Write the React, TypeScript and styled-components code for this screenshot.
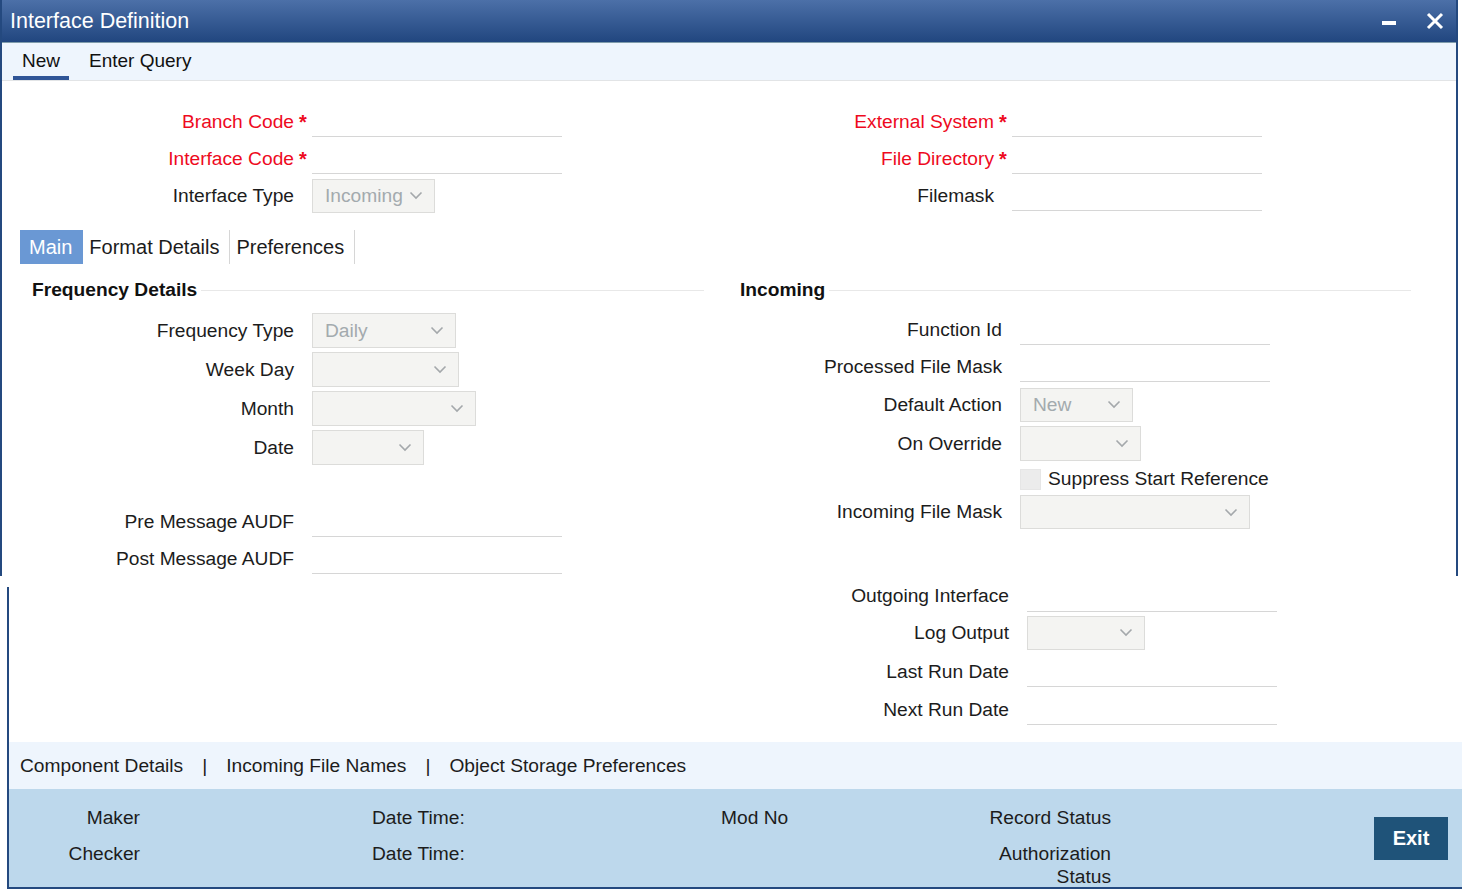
import React from "react";
import styled, { createGlobalStyle } from "styled-components";

const Global = createGlobalStyle`
  html, body { margin: 0; padding: 0; background: #ffffff; }
  body { font-family: "Liberation Sans", Arial, sans-serif; color: #1c1c1c; }
  * { box-sizing: border-box; }
`;

const Page = styled.div`
  width: 1462px;
  display: flex;
  flex-direction: column;
`;

const TopWindow = styled.div`
  width: 1458px;
  height: 576px;
  border-left: 2px solid #24497f;
  border-right: 2px solid #24497f;
  overflow: hidden;
  display: flex;
  flex-direction: column;
`;

const TitleBar = styled.div`
  height: 43px;
  flex: none;
  display: flex;
  align-items: center;
  padding: 0 12px 0 8px;
  background: linear-gradient(#4c70a8, #21467f);
  border-bottom: 1px solid #7f9cab;
`;

const Title = styled.div`
  flex: 1;
  color: #ffffff;
  font-size: 21.5px;
  line-height: 42px;
`;

const WinControls = styled.div`
  display: flex;
  align-items: center;
  gap: 30px;
`;

const MinIcon = styled.div`
  width: 14px;
  height: 4px;
  background: #ffffff;
  margin-top: 3px;
`;

const Toolbar = styled.div`
  height: 38px;
  flex: none;
  display: flex;
  align-items: stretch;
  gap: 11px;
  padding-left: 11px;
  background: #eef5fd;
  border-bottom: 1px solid #e2e4e6;
`;

const ToolItem = styled.div<{ $active?: boolean }>`
  padding: 0 9px;
  font-size: 19px;
  line-height: 36px;
  color: #111;
  border-bottom: 4px solid ${(p) => (p.$active ? "#2f5597" : "transparent")};
  height: 37px;
`;

const HeaderGrid = styled.div`
  display: grid;
  grid-template-columns: 560px 1fr;
  grid-auto-rows: 37px;
  padding-top: 22px;
`;

const Row = styled.div<{ $labelW: number; $h?: number; $top?: boolean }>`
  display: grid;
  grid-template-columns: ${(p) => p.$labelW}px 18px auto;
  align-items: ${(p) => (p.$top ? "start" : "center")};
  height: ${(p) => p.$h ?? 37}px;
`;

const Label = styled.div<{ $required?: boolean; $lh?: number }>`
  text-align: right;
  font-size: 19.2px;
  line-height: ${(p) => p.$lh ?? 22}px;
  color: ${(p) => (p.$required ? "#ee0a1e" : "#1c1c1c")};
  white-space: nowrap;
`;

const Star = styled.span`
  color: #ee0a1e;
  font-size: 20px;
  font-weight: bold;
  padding-left: 5px;
  align-self: center;
  line-height: 22px;
`;

const TextInput = styled.div<{ $w?: number; $h?: number }>`
  width: ${(p) => p.$w ?? 250}px;
  height: ${(p) => p.$h ?? 30}px;
  border-bottom: 1px solid #d6d6d6;
`;

const SelectBox = styled.div<{ $w: number; $h: number }>`
  width: ${(p) => p.$w}px;
  height: ${(p) => p.$h}px;
  background: #f4f4f2;
  border: 1px solid #dcdcda;
  display: flex;
  align-items: center;
  padding: 0 11px 0 12px;
  font-size: 19.2px;
  color: #a3aaae;
`;

const SelectValue = styled.span`
  flex: 1;
`;

const Chevron = () => (
  <svg width="14" height="9" viewBox="0 0 14 9">
    <path d="M1.5 1.5 L7 7 L12.5 1.5" fill="none" stroke="#a4a8ab" strokeWidth="1.6" />
  </svg>
);

const Select = ({ w, h, value }: { w: number; h: number; value?: string }) => (
  <SelectBox $w={w} $h={h}>
    <SelectValue>{value}</SelectValue>
    <Chevron />
  </SelectBox>
);

const TabBar = styled.div`
  display: flex;
  margin-top: 16px;
  padding-left: 18px;
  height: 34px;
`;

const Tab = styled.div<{ $active?: boolean }>`
  font-size: 20px;
  line-height: 34px;
  padding: ${(p) => (p.$active ? "0 10px 0 9px" : "0 10px 0 6px")};
  background: ${(p) => (p.$active ? "#6a98d4" : "transparent")};
  color: ${(p) => (p.$active ? "#ffffff" : "#1c1c1c")};
  border-right: 1px solid ${(p) => (p.$active ? "transparent" : "#d6d6d6")};
`;

const Columns = styled.div`
  display: flex;
  margin-top: 14px;
`;

const Column = styled.div<{ $w: number }>`
  width: ${(p) => p.$w}px;
  flex: none;
  display: flex;
  flex-direction: column;
`;

const Heading = styled.div<{ $pad: number }>`
  display: flex;
  align-items: center;
  height: 22px;
  padding-left: ${(p) => p.$pad}px;
  margin-top: 1px;
  margin-bottom: 10px;
  font-size: 19.2px;
  font-weight: bold;
  color: #111;
  &::after {
    content: "";
    flex: 1;
    height: 1px;
    margin-left: 4px;
    background: #e8e8e8;
  }
`;

const Spacer = styled.div<{ $h: number }>`
  height: ${(p) => p.$h}px;
`;

const CheckRow = styled.div`
  display: flex;
  align-items: center;
  height: 32px;
  padding-left: 316px;
  gap: 7px;
  font-size: 19.2px;
  color: #1c1c1c;
`;

const CheckBox = styled.div`
  width: 21px;
  height: 21px;
  background: #ececec;
  border: 1px solid #e6e6e6;
`;

const BottomWindow = styled.div`
  margin-top: 11px;
  margin-left: 7px;
  border-left: 2px solid #24497f;
  border-bottom: 2px solid #24497f;
  display: flex;
  flex-direction: column;
`;

const ContColumns = styled.div`
  display: flex;
  padding-left: 702px;
`;

const LinksBar = styled.div`
  margin-top: 14px;
  height: 47px;
  background: #eef5fd;
  display: flex;
  align-items: center;
  padding-left: 11px;
  font-size: 19.2px;
  color: #1c1c1c;
`;

const Sep = styled.span`
  margin: 0 19px;
`;

const AuditBar = styled.div`
  height: 98px;
  background: #bdd8ec;
  display: flex;
  align-items: flex-start;
`;

const AuditGrid = styled.div`
  display: grid;
  grid-template-columns: 131px 232px 349px 268px 122px;
  grid-auto-rows: 22px;
  row-gap: 14px;
  padding-top: 17px;
  font-size: 19.2px;
  line-height: 22px;
  color: #1c1c1c;
`;

const AuditCell = styled.div<{ $right?: boolean; $col: number }>`
  grid-column: ${(p) => p.$col};
  text-align: ${(p) => (p.$right ? "right" : "left")};
  line-height: 23px;
`;

const ExitButton = styled.button`
  margin-left: auto;
  margin-right: 14px;
  align-self: center;
  width: 74px;
  height: 43px;
  border: none;
  background: #1f5379;
  color: #ffffff;
  font-family: "Liberation Sans", Arial, sans-serif;
  font-weight: bold;
  font-size: 20px;
  padding: 0;
`;

export default function App() {
  return (
    <>
      <Global />
      <Page>
        <TopWindow>
          <TitleBar>
            <Title>Interface Definition</Title>
            <WinControls>
              <MinIcon />
              <svg width="18" height="18" viewBox="0 0 18 18">
                <path d="M2 2 L16 16 M16 2 L2 16" stroke="#ffffff" strokeWidth="3" />
              </svg>
            </WinControls>
          </TitleBar>
          <Toolbar>
            <ToolItem $active>New</ToolItem>
            <ToolItem>Enter Query</ToolItem>
          </Toolbar>
          <HeaderGrid>
            <Row $labelW={292}>
              <Label $required>Branch Code</Label>
              <Star>*</Star>
              <TextInput />
            </Row>
            <Row $labelW={432}>
              <Label $required>External System</Label>
              <Star>*</Star>
              <TextInput />
            </Row>
            <Row $labelW={292}>
              <Label $required>Interface Code</Label>
              <Star>*</Star>
              <TextInput />
            </Row>
            <Row $labelW={432}>
              <Label $required>File Directory</Label>
              <Star>*</Star>
              <TextInput />
            </Row>
            <Row $labelW={292}>
              <Label>Interface Type</Label>
              <span />
              <Select w={123} h={34} value="Incoming" />
            </Row>
            <Row $labelW={432}>
              <Label>Filemask</Label>
              <span />
              <TextInput />
            </Row>
          </HeaderGrid>
          <TabBar>
            <Tab $active>Main</Tab>
            <Tab>Format Details</Tab>
            <Tab>Preferences</Tab>
          </TabBar>
          <Columns>
            <Column $w={702}>
              <Heading $pad={30}>Frequency Details</Heading>
              <Row $labelW={292} $h={39}>
                <Label>Frequency Type</Label>
                <span />
                <Select w={144} h={35} value="Daily" />
              </Row>
              <Row $labelW={292} $h={39}>
                <Label>Week Day</Label>
                <span />
                <Select w={147} h={35} />
              </Row>
              <Row $labelW={292} $h={39}>
                <Label>Month</Label>
                <span />
                <Select w={164} h={35} />
              </Row>
              <Row $labelW={292} $h={39}>
                <Label>Date</Label>
                <span />
                <Select w={112} h={35} />
              </Row>
              <Spacer $h={36} />
              <Row $labelW={292}>
                <Label>Pre Message AUDF</Label>
                <span />
                <TextInput />
              </Row>
              <Row $labelW={292}>
                <Label>Post Message AUDF</Label>
                <span />
                <TextInput />
              </Row>
            </Column>
            <Column $w={707}>
              <Heading $pad={36}>Incoming</Heading>
              <Row $labelW={298}>
                <Label>Function Id</Label>
                <span />
                <TextInput />
              </Row>
              <Row $labelW={298}>
                <Label>Processed File Mask</Label>
                <span />
                <TextInput />
              </Row>
              <Row $labelW={298} $h={39}>
                <Label>Default Action</Label>
                <span />
                <Select w={113} h={34} value="New" />
              </Row>
              <Row $labelW={298} $h={39}>
                <Label>On Override</Label>
                <span />
                <Select w={121} h={35} />
              </Row>
              <CheckRow>
                <CheckBox />
                <span>Suppress Start Reference</span>
              </CheckRow>
              <Row $labelW={298} $h={34}>
                <Label>Incoming File Mask</Label>
                <span />
                <Select w={230} h={34} />
              </Row>
            </Column>
          </Columns>
        </TopWindow>
        <BottomWindow>
          <ContColumns>
            <Column $w={707}>
              <Row $labelW={298} $h={26} $top>
                <Label $lh={17}>Outgoing Interface</Label>
                <span />
                <TextInput $h={25} />
              </Row>
              <Row $labelW={298} $h={39}>
                <Label>Log Output</Label>
                <span />
                <Select w={118} h={34} />
              </Row>
              <Row $labelW={298} $h={39}>
                <Label>Last Run Date</Label>
                <span />
                <TextInput />
              </Row>
              <Row $labelW={298}>
                <Label>Next Run Date</Label>
                <span />
                <TextInput />
              </Row>
            </Column>
          </ContColumns>
          <LinksBar>
            <span>Component Details</span>
            <Sep>|</Sep>
            <span>Incoming File Names</span>
            <Sep>|</Sep>
            <span>Object Storage Preferences</span>
          </LinksBar>
          <AuditBar>
            <AuditGrid>
              <AuditCell $col={1} $right>Maker</AuditCell>
              <AuditCell $col={3}>Date Time:</AuditCell>
              <AuditCell $col={4}>Mod No</AuditCell>
              <AuditCell $col={5} $right>Record Status</AuditCell>
              <AuditCell $col={1} $right>Checker</AuditCell>
              <AuditCell $col={3}>Date Time:</AuditCell>
              <AuditCell $col={5} $right>Authorization Status</AuditCell>
            </AuditGrid>
            <ExitButton>Exit</ExitButton>
          </AuditBar>
        </BottomWindow>
      </Page>
    </>
  );
}
